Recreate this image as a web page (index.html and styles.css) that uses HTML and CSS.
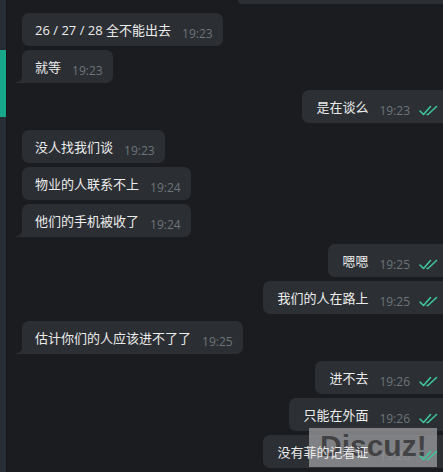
FILE: index.html
```html
<!DOCTYPE html>
<html lang="zh-CN">
<head>
<meta charset="utf-8">
<link rel="stylesheet" href="styles.css">
</head>
<body>
<div class="app">
  <div class="side"><div class="active"></div></div>
  <div class="chat">
    <div class="stub"></div>

    <div class="row in g-new"><div class="bubble"><span class="text">26 / 27 / 28 全不能出去</span><span class="time">19:23</span></div></div>
    <div class="row in"><div class="bubble tail"><span class="text">就等</span><span class="time">19:23</span></div></div>

    <div class="row out g-new"><div class="bubble"><span class="text">是在谈么</span><span class="time">19:23</span><svg class="check" viewBox="0 0 19 11"><path d="M1 6 L4.5 9.5 L11.5 1.5 M8 9.5 L9 9.5 L17.5 1.5"/></svg></div></div>

    <div class="row in g-new"><div class="bubble"><span class="text">没人找我们谈</span><span class="time">19:23</span></div></div>
    <div class="row in"><div class="bubble"><span class="text">物业的人联系不上</span><span class="time">19:24</span></div></div>
    <div class="row in"><div class="bubble tail"><span class="text">他们的手机被收了</span><span class="time">19:24</span></div></div>

    <div class="row out g-new"><div class="bubble"><span class="text cjk">嗯嗯</span><span class="time">19:25</span><svg class="check" viewBox="0 0 19 11"><path d="M1 6 L4.5 9.5 L11.5 1.5 M8 9.5 L9 9.5 L17.5 1.5"/></svg></div></div>
    <div class="row out"><div class="bubble"><span class="text">我们的人在路上</span><span class="time">19:25</span><svg class="check" viewBox="0 0 19 11"><path d="M1 6 L4.5 9.5 L11.5 1.5 M8 9.5 L9 9.5 L17.5 1.5"/></svg></div></div>

    <div class="row in g-new"><div class="bubble tail"><span class="text">估计你们的人应该进不了了</span><span class="time">19:25</span></div></div>

    <div class="row out g-new"><div class="bubble"><span class="text">进不去</span><span class="time">19:26</span><svg class="check" viewBox="0 0 19 11"><path d="M1 6 L4.5 9.5 L11.5 1.5 M8 9.5 L9 9.5 L17.5 1.5"/></svg></div></div>
    <div class="row out"><div class="bubble"><span class="text">只能在外面</span><span class="time">19:26</span><svg class="check" viewBox="0 0 19 11"><path d="M1 6 L4.5 9.5 L11.5 1.5 M8 9.5 L9 9.5 L17.5 1.5"/></svg></div></div>
    <div class="row out"><div class="bubble over"><span class="text">没有菲的记着证</span><span class="time">19:26</span><svg class="check" viewBox="0 0 19 11"><path d="M1 6 L4.5 9.5 L11.5 1.5 M8 9.5 L9 9.5 L17.5 1.5"/></svg></div></div>
  </div>
  <div class="wm">Discuz!</div>
</div>
</body>
</html>
```

FILE: styles.css
```css
html, body {
  margin: 0;
  padding: 0;
  background: #1b1c20;
}
.app {
  position: relative;
  width: 443px;
  height: 472px;
  overflow: hidden;
  display: flex;
  background: #1b1c20;
  font-family: "Open Sans", "Noto Sans CJK SC", sans-serif;
}
.side {
  width: 6px;
  flex: none;
  background: #272d34;
  border-right: 1px solid #15161a;
  padding-top: 50px;
}
.active {
  height: 67px;
  background: #17a88c;
}
.chat {
  flex: 1;
  display: flex;
  flex-direction: column;
  gap: 4px;
  padding-left: 15px;
  margin-right: -8px;
}
.stub {
  align-self: flex-end;
  width: 213px;
  height: 4px;
  background: #2b2f34;
  border-radius: 0 0 0 6px;
  margin-bottom: 5px;
}
.row {
  display: flex;
}
.row.in { justify-content: flex-start; }
.row.out { justify-content: flex-end; }
.row.g-new { margin-top: 3px; }
.row.g-new:nth-child(2) { margin-top: 0; }
.bubble {
  position: relative;
  display: flex;
  align-items: flex-start;
  background: #2b2e33;
  border-radius: 7px;
  padding: 7px 10px 6px 13px;
  color: #ececec;
  font-size: 13px;
}
.row.out .bubble {
  background: #2c3035;
  padding-left: 14px;
  padding-right: 13px;
}
.bubble.tail {
  border-bottom-left-radius: 0;
}
.bubble.tail::before {
  content: "";
  position: absolute;
  left: -6px;
  bottom: 0;
  width: 6px;
  height: 7px;
  background: radial-gradient(circle at 0 0, transparent 6px, #2b2e33 6.5px);
}
.text {
  font-size: 13px;
  line-height: 20px;
  white-space: nowrap;
}
.text.cjk {
  font-family: "Noto Sans CJK SC", "Noto Sans CJK TC", sans-serif;
}
.time {
  align-self: flex-end;
  margin-left: 11px;
  margin-bottom: -1px;
  font-size: 12px;
  line-height: 14px;
  color: #6e7479;
}
.check {
  align-self: flex-end;
  width: 19px;
  height: 11px;
  margin-left: 9px;
  margin-bottom: 1px;
  fill: none;
  stroke: #3fc49d;
  stroke-width: 1.6;
  stroke-linecap: round;
  stroke-linejoin: round;
}
.bubble.over .text,
.bubble.over .check {
  position: relative;
  z-index: 2;
}
.wm {
  position: absolute;
  z-index: 1;
  left: 309px;
  top: 428px;
  width: 128px;
  height: 39px;
  background: rgba(150, 150, 152, 0.8);
  color: rgba(55, 55, 58, 0.85);
  font-family: "Liberation Sans", sans-serif;
  font-weight: bold;
  font-size: 30px;
  line-height: 36px;
  padding-left: 11px;
  box-sizing: border-box;
  white-space: nowrap;
}
```
